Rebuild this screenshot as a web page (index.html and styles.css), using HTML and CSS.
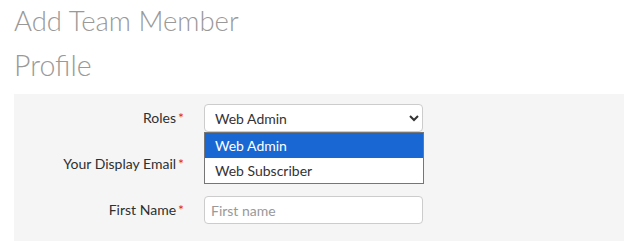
FILE: index.html
```html
<!DOCTYPE html>
<html lang="en">

<head>
    <meta charset="UTF-8">
    <meta name="viewport" content="width=device-width, initial-scale=1.0">
    <title>Add Team Member</title>
    <link rel="stylesheet" href="styles.css">
</head>

<body>
    <div class="page">
        <h1 class="page-title">Add Team Member</h1>
        <h2 class="section-title">Profile</h2>

        <form class="panel" action="#" method="post">
            <label class="field-label" for="roles">Roles<span class="req">*</span></label>
            <div class="select-wrap">
                <select id="roles" name="roles" class="field-select">
                    <option selected>Web Admin</option>
                    <option>Web Subscriber</option>
                </select>
                <ul class="dropdown">
                    <li class="option active">Web Admin</li>
                    <li class="option">Web Subscriber</li>
                </ul>
            </div>

            <label class="field-label" for="email">Your Display Email<span class="req">*</span></label>
            <input class="field-input" type="email" id="email" name="email">

            <label class="field-label" for="first-name">First Name<span class="req">*</span></label>
            <input class="field-input" type="text" id="first-name" name="first-name" placeholder="First name">
        </form>
    </div>
</body>

</html>
```

FILE: styles.css
```css
body {
    margin: 0;
    font-family: Lato, "Open Sans", sans-serif;
    color: #333;
    background: #fff;
}

.page {
    padding: 4px 11px 0 14px;
}

.page-title {
    margin: 0;
    font-size: 27.5px;
    line-height: 34px;
    font-weight: 300;
    color: #999;
}

.section-title {
    margin: 9px 0 0;
    font-size: 28.5px;
    line-height: 36px;
    font-weight: 300;
    color: #999;
}

.panel {
    margin-top: 11px;
    padding: 10px 0 20px;
    background-color: #f5f5f5;
    display: grid;
    grid-template-columns: 170px 219px;
    column-gap: 20px;
    row-gap: 18px;
    font-size: 14px;
}

.field-label {
    text-align: right;
    line-height: 28px;
    color: #2f2f2f;
}

.req {
    color: #e3262b;
    margin-left: 2px;
}

.select-wrap {
    position: relative;
}

.field-select,
.field-input {
    box-sizing: border-box;
    width: 100%;
    height: 28px;
    margin: 0;
    padding: 0 6px;
    border: 1px solid #ccc;
    border-radius: 4px;
    background: #fff;
    font-family: Lato, sans-serif;
    font-size: 14px;
    color: #333;
}

.field-input::placeholder {
    color: #999;
}

.dropdown {
    position: absolute;
    top: 28px;
    left: 0;
    width: 220px;
    box-sizing: border-box;
    margin: 0;
    padding: 0;
    list-style: none;
    background: #fff;
    border: 1px solid #767676;
    z-index: 2;
}

.option {
    height: 25px;
    line-height: 25px;
    padding-left: 10px;
    color: #333;
}

.option.active {
    background-color: #1967d2;
    color: #fff;
}
```
